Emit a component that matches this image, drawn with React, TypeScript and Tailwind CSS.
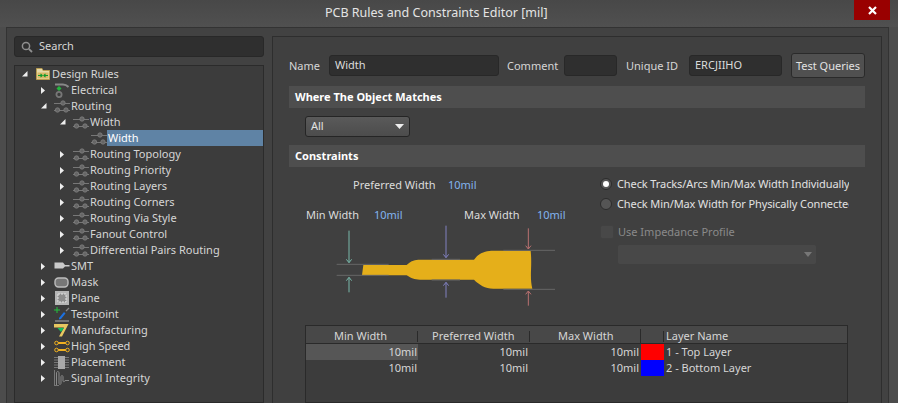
const FONT = { fontFamily: '"Noto Sans", Tahoma, sans-serif' };

function Arrow({ open }: { open?: boolean }) {
  return open ? (
    <svg width="6" height="6" viewBox="0 0 6 6" className="shrink-0">
      <path d="M0 5.5H5.5V0Z" fill="#eee" />
    </svg>
  ) : (
    <svg width="4" height="7" viewBox="0 0 4 7" className="shrink-0">
      <path d="M0 0L4 3.5L0 7Z" fill="#eee" />
    </svg>
  );
}

function RouteIcon() {
  return (
    <svg width="16" height="13" viewBox="0 0 16 13" className="shrink-0">
      <path d="M0 3.5H16M0 10.5H16" stroke="#777" strokeWidth="1" />
      <circle cx="9" cy="3" r="2.2" fill="#666" stroke="#808080" strokeWidth="0.8" />
      <circle cx="3.5" cy="10" r="2.2" fill="#666" stroke="#808080" strokeWidth="0.8" />
      <circle cx="12" cy="10" r="2.2" fill="#666" stroke="#808080" strokeWidth="0.8" />
    </svg>
  );
}

function FolderIcon() {
  return (
    <svg width="14" height="12" viewBox="0 0 14 12" className="shrink-0">
      <path d="M0.5 0.5H6L7 2.5H13.5V11.5H0.5Z" fill="#e6d9a8" stroke="#b89c50" />
      <path d="M1.5 4.5H12.5V10.5H1.5Z" fill="#d8b868" />
      <path d="M2 7.5H6M4.5 5.8L6.2 7.5L4.5 9.2M12 7.5H8M9.5 5.8L7.8 7.5L9.5 9.2" stroke="#0c9a2c" strokeWidth="1.1" fill="none" />
    </svg>
  );
}

function ElectricalIcon() {
  return (
    <svg width="15" height="15" viewBox="0 0 15 15" className="shrink-0">
      <path d="M1 1.5H9C11 1.5 13 2.5 14.5 4" stroke="#888" strokeWidth="2" fill="none" />
      <path d="M5 3L7.5 5.5L5 8L2.5 5.5Z" fill="#22b53c" />
      <circle cx="5" cy="11.5" r="2.6" fill="none" stroke="#777" strokeWidth="1.8" />
    </svg>
  );
}

function SmtIcon() {
  return (
    <svg width="16" height="10" viewBox="0 0 16 10" className="shrink-0">
      <path d="M0.5 1.5H9L11 4H15.5V5.5H11L9 7.5H0.5Z" fill="#c9c9c9" />
    </svg>
  );
}

function MaskIcon() {
  return (
    <svg width="15" height="11" viewBox="0 0 15 11" className="shrink-0">
      <rect x="1" y="1" width="13" height="9" rx="3.5" fill="#777" stroke="#bdbdbd" strokeWidth="1.4" />
    </svg>
  );
}

function PlaneIcon() {
  return (
    <svg width="14" height="14" viewBox="0 0 14 14" className="shrink-0">
      <rect width="14" height="14" fill="#b5b5b5" />
      <rect x="3" y="3" width="8" height="8" fill="#8c8c8c" stroke="#e2e2e2" strokeDasharray="2 1" />
    </svg>
  );
}

function TestpointIcon() {
  return (
    <svg width="16" height="15" viewBox="0 0 16 15" className="shrink-0">
      <path d="M0 3H6M3 0V6" stroke="#22c03c" strokeWidth="1" />
      <path d="M5 11L10 5L11.5 6.5L7 12L5 12.5Z" fill="#1c70e0" />
      <path d="M12 4L15 1" stroke="#888" strokeWidth="1.2" />
      <path d="M1 14H15" stroke="#aaa" strokeWidth="1" />
    </svg>
  );
}

function ManufacturingIcon() {
  return (
    <svg width="15" height="14" viewBox="0 0 15 14" className="shrink-0">
      <path d="M0 1H14.5L8 13.5H5L10 4.5H0Z" fill="#e8c860" />
      <path d="M3.5 5H10L7 9Z" fill="#10c060" />
    </svg>
  );
}

function HighSpeedIcon() {
  return (
    <svg width="16" height="13" viewBox="0 0 16 13" className="shrink-0">
      <path d="M2 3H14M2 10H14" stroke="#f0b020" strokeWidth="2" />
      <circle cx="2.5" cy="3" r="1.8" fill="#3f3f3f" stroke="#f0b020" />
      <circle cx="13.5" cy="3" r="1.8" fill="#3f3f3f" stroke="#f0b020" />
      <circle cx="2.5" cy="10" r="1.8" fill="#3f3f3f" stroke="#f0b020" />
      <circle cx="13.5" cy="10" r="1.8" fill="#3f3f3f" stroke="#f0b020" />
    </svg>
  );
}

function PlacementIcon() {
  return (
    <svg width="15" height="13" viewBox="0 0 15 13" className="shrink-0">
      <path d="M0 1.5H15M0 4H15M0 6.5H15M0 9H15M0 11.5H15" stroke="#777" strokeWidth="1" />
      <rect x="4" y="0" width="7" height="13" fill="#a8a8a8" />
    </svg>
  );
}

function SignalIcon() {
  return (
    <svg width="16" height="16" viewBox="0 0 16 16" className="shrink-0">
      <path d="M0.5 0V16M0.5 15.5H5" stroke="#777" />
      <path d="M2.5 15V3C2.5 1 5 1 5 3V13C5 15 7 15 7 13V7C7 5 9 5 9 7V11C9 12 11 12 11 10.5H15" stroke="#8a8a8a" fill="none" />
    </svg>
  );
}

type TreeRow = { label: string; level: number; arrow?: "open" | "closed"; icon: React.ReactNode; selected?: boolean };

const ROWS: TreeRow[] = [
  { label: "Design Rules", level: 0, arrow: "open", icon: <FolderIcon /> },
  { label: "Electrical", level: 1, arrow: "closed", icon: <ElectricalIcon /> },
  { label: "Routing", level: 1, arrow: "open", icon: <RouteIcon /> },
  { label: "Width", level: 2, arrow: "open", icon: <RouteIcon /> },
  { label: "Width", level: 3, icon: <RouteIcon />, selected: true },
  { label: "Routing Topology", level: 2, arrow: "closed", icon: <RouteIcon /> },
  { label: "Routing Priority", level: 2, arrow: "closed", icon: <RouteIcon /> },
  { label: "Routing Layers", level: 2, arrow: "closed", icon: <RouteIcon /> },
  { label: "Routing Corners", level: 2, arrow: "closed", icon: <RouteIcon /> },
  { label: "Routing Via Style", level: 2, arrow: "closed", icon: <RouteIcon /> },
  { label: "Fanout Control", level: 2, arrow: "closed", icon: <RouteIcon /> },
  { label: "Differential Pairs Routing", level: 2, arrow: "closed", icon: <RouteIcon /> },
  { label: "SMT", level: 1, arrow: "closed", icon: <SmtIcon /> },
  { label: "Mask", level: 1, arrow: "closed", icon: <MaskIcon /> },
  { label: "Plane", level: 1, arrow: "closed", icon: <PlaneIcon /> },
  { label: "Testpoint", level: 1, arrow: "closed", icon: <TestpointIcon /> },
  { label: "Manufacturing", level: 1, arrow: "closed", icon: <ManufacturingIcon /> },
  { label: "High Speed", level: 1, arrow: "closed", icon: <HighSpeedIcon /> },
  { label: "Placement", level: 1, arrow: "closed", icon: <PlacementIcon /> },
  { label: "Signal Integrity", level: 1, arrow: "closed", icon: <SignalIcon /> },
];

// indent per tree level, taken from the arrow column
const INDENT = ["pl-[6px]", "pl-[25px]", "pl-[44px]", "pl-[62px]"];

function Tree() {
  return (
    <div className="mt-2 flex-1 border border-[#2b2b2b] bg-[#3c3c3c]">
      {ROWS.map((row, i) => (
        <div key={i} className={`flex h-4 items-center text-[11px] text-[#d6d6d6] ${INDENT[row.level]}`}>
          <span className="flex w-[13px] shrink-0 items-center pl-[1px]">{row.arrow && <Arrow open={row.arrow === "open"} />}</span>
          <span className="flex w-[17px] shrink-0 items-center justify-center">{row.icon}</span>
          <span className={row.selected ? "flex h-4 flex-1 items-center bg-[#5f83a5] pl-px text-white" : "pl-px"}>{row.label}</span>
        </div>
      ))}
    </div>
  );
}

function SectionHeader({ children }: { children: React.ReactNode }) {
  return <div className="flex h-[22px] items-center bg-[#4e4e4e] pl-[6px] text-[11px] font-bold text-white">{children}</div>;
}

function Field({ value, className }: { value?: string; className: string }) {
  return (
    <div className={`flex h-[21px] items-center rounded-[3px] border border-[#282828] bg-[#2f2f2f] pl-[5px] text-[11px] text-[#dcdcdc] ${className}`}>
      {value}
    </div>
  );
}

function Diagram() {
  return (
    <svg width="300" height="85" viewBox="0 165 900 255" className="ml-px mt-[2px] block">
      <path d="M220 285L350 285C365 270 375 270 390 269L552 269C570 245 590 243 610 242L722 242C727 290 718 320 727 356L610 356C585 355 568 345 552 329L390 329C372 329 365 325 350 316L216 316Z" fill="#e5af1a" />
      <g stroke="#666" strokeWidth="3" fill="none">
        <path d="M140 283H296M140 316H296M425 268H510M425 330H510M640 241H795M640 358H795" />
      </g>
      <g stroke="#78b8aa" strokeWidth="3" fill="none">
        <path d="M177 182V278M169 268L177 278L185 268M177 367V322M169 332L177 322L185 332" />
      </g>
      <g stroke="#8080c0" strokeWidth="3" fill="none">
        <path d="M468 167V263M460 253L468 263L476 253M468 383V337M460 347L468 337L476 347" />
      </g>
      <g stroke="#b87070" strokeWidth="3" fill="none">
        <path d="M715 175V237M707 227L715 237L723 227M715 407V363M707 373L715 363L723 373" />
      </g>
    </svg>
  );
}

const TABLE_ROWS = [
  { name: "1 - Top Layer", color: "bg-[#ff0000]", active: true },
  { name: "2 - Bottom Layer", color: "bg-[#0000ff]", active: false },
];

function LayerTable() {
  return (
    <div className="ml-[16px] mr-[17px] mt-[15px] flex-1 border border-[#2a2a2a] bg-[#3c3c3c] text-[11px] text-[#d6d6d6]">
      <div className="grid h-[18px] grid-cols-[112px_112px_111px_23px_1fr] items-center border-b border-[#2a2a2a] bg-[#484848] pt-[2px]">
        <div className="flex h-[11px] items-center border-r border-[#2a2a2a] pl-[28px]">Min Width</div>
        <div className="flex h-[11px] items-center border-r border-[#2a2a2a] pl-[14px]">Preferred Width</div>
        <div className="flex h-[15px] items-center border-r border-[#2a2a2a] pl-[28px]">Max Width</div>
        <div className="h-[11px] border-r border-[#2a2a2a]" />
        <div className="pl-[2px]">Layer Name</div>
      </div>
      {TABLE_ROWS.map((row) => (
        <div key={row.name} className="grid h-4 grid-cols-[112px_112px_111px_23px_1fr] items-center">
          <div className={`flex h-4 items-center justify-end pr-px ${row.active ? "bg-[#565656]" : ""}`}>10mil</div>
          <div className="pr-[2px] text-right">10mil</div>
          <div className="pr-[2px] text-right">10mil</div>
          <div className={`h-4 ${row.color}`} />
          <div className="pl-[2px]">{row.name}</div>
        </div>
      ))}
    </div>
  );
}

function Radio({ checked, label }: { checked?: boolean; label: string }) {
  return (
    <div className="flex h-4 items-center whitespace-nowrap text-[11px] tracking-[-0.1px] text-[#e2e2e2]">
      <span className="flex h-3 w-3 shrink-0 items-center justify-center rounded-full border border-[#2c2c2c] bg-[#555]">
        {checked && <span className="h-[6px] w-[6px] rounded-full bg-white" />}
      </span>
      <span className="ml-[5px]">{label}</span>
    </div>
  );
}

function Options() {
  return (
    <div className="ml-[11px] w-[249px] overflow-hidden pt-[9px]">
      <Radio checked label="Check Tracks/Arcs Min/Max Width Individually" />
      <div className="mt-1">
        <Radio label="Check Min/Max Width for Physically Connected" />
      </div>
      <div className="mt-[13px] flex h-[14px] items-center text-[11px] text-[#8a8a8a]">
        <span className="h-[14px] w-[14px] rounded-[2px] border border-[#414141] bg-[#484848]" />
        <span className="ml-1">Use Impedance Profile</span>
      </div>
      <div className="ml-[18px] mt-[6px] flex h-[19px] w-[198px] items-center justify-end rounded-[2px] bg-[#484848] pr-[4px]">
        <svg width="8" height="5" viewBox="0 0 8 5">
          <path d="M0 0H8L4 5Z" fill="#777" />
        </svg>
      </div>
    </div>
  );
}

export default function App() {
  return (
    <div className="flex h-[403px] w-[898px] flex-col overflow-hidden bg-[#4c4c4c]" style={FONT}>
      <div className="flex h-[27px] shrink-0 bg-gradient-to-b from-[#484848] to-[#505050]">
        <div className="flex-1 pl-[325px] pt-[4px] text-[12.5px] text-[#e4e4e4]">PCB Rules and Constraints Editor [mil]</div>
        <div className="mr-2 flex h-5 w-9 items-center justify-center bg-[#990000]">
          <svg width="9" height="9" viewBox="0 0 9 9">
            <path d="M1 1L8 8M8 1L1 8" stroke="#fff" strokeWidth="2.2" />
          </svg>
        </div>
      </div>

      <div className="ml-[6px] mr-[9px] flex min-h-0 flex-1 border-l border-r border-t border-[#333] bg-[#424242] pl-[7px] pt-2">
        <div className="flex w-[250px] shrink-0 flex-col">
          <div className="flex h-[21px] shrink-0 items-center rounded-[3px] border border-[#282828] bg-[#2f2f2f] pl-[6px] text-[11px] text-[#d6d6d6]">
            <svg width="12" height="12" viewBox="0 0 12 12" className="mr-[6px]">
              <circle cx="5" cy="5" r="3.6" fill="none" stroke="#8f8f8f" strokeWidth="1.5" />
              <path d="M7.8 7.8L11 11" stroke="#8f8f8f" strokeWidth="1.8" />
            </svg>
            Search
          </div>
          <Tree />
        </div>

        <div className="ml-2 flex w-[610px] shrink-0 flex-col border-l border-r border-t border-[#2e2e2e] bg-[#404040] pl-4 pr-[16px]">
          <div className="mt-4 flex h-[25px] shrink-0 items-center text-[11px] text-[#d6d6d6]">
            <span className="w-10 pt-px">Name</span>
            <Field value="Width" className="w-[170px]" />
            <span className="ml-2 w-[57px] pt-px">Comment</span>
            <Field className="w-[53px]" />
            <span className="ml-[9px] w-[63px] pt-px">Unique ID</span>
            <Field value="ERCJIIHO" className="w-[93px]" />
            <div className="ml-[9px] flex h-[25px] w-[74px] items-center justify-center rounded-[3px] border border-[#2a2a2a] bg-[#505050] pt-px text-[#e2e2e2]">Test Queries</div>
          </div>

          <div className="mt-2 shrink-0"><SectionHeader>Where The Object Matches</SectionHeader></div>
          <div className="ml-4 mt-2 flex h-[21px] w-[105px] shrink-0 items-center justify-between rounded-[3px] border border-[#252525] bg-gradient-to-b from-[#5a5a5a] to-[#4c4c4c] pl-[5px] pr-[5px] text-[11px] text-[#e2e2e2]">
            All
            <svg width="9" height="5" viewBox="0 0 9 5">
              <path d="M0 0H9L4.5 5Z" fill="#eee" />
            </svg>
          </div>
          <div className="mt-2 shrink-0"><SectionHeader>Constraints</SectionHeader></div>

          <div className="flex shrink-0">
            <div className="w-[300px] shrink-0 text-[11px] text-[#dcdcdc]">
              <div className="ml-[64px] mt-[10px] flex h-4 items-center">
                <span className="w-[95px]">Preferred Width</span>
                <span className="text-[#82b4f0]">10mil</span>
              </div>
              <div className="ml-[17px] mt-[14px] flex h-4 items-center">
                <span className="w-[68px]">Min Width</span>
                <span className="w-[90px] text-[#82b4f0]">10mil</span>
                <span className="w-[73px]">Max Width</span>
                <span className="text-[#82b4f0]">10mil</span>
              </div>
              <Diagram />
            </div>
            <Options />
          </div>

          <LayerTable />
        </div>
      </div>
    </div>
  );
}
